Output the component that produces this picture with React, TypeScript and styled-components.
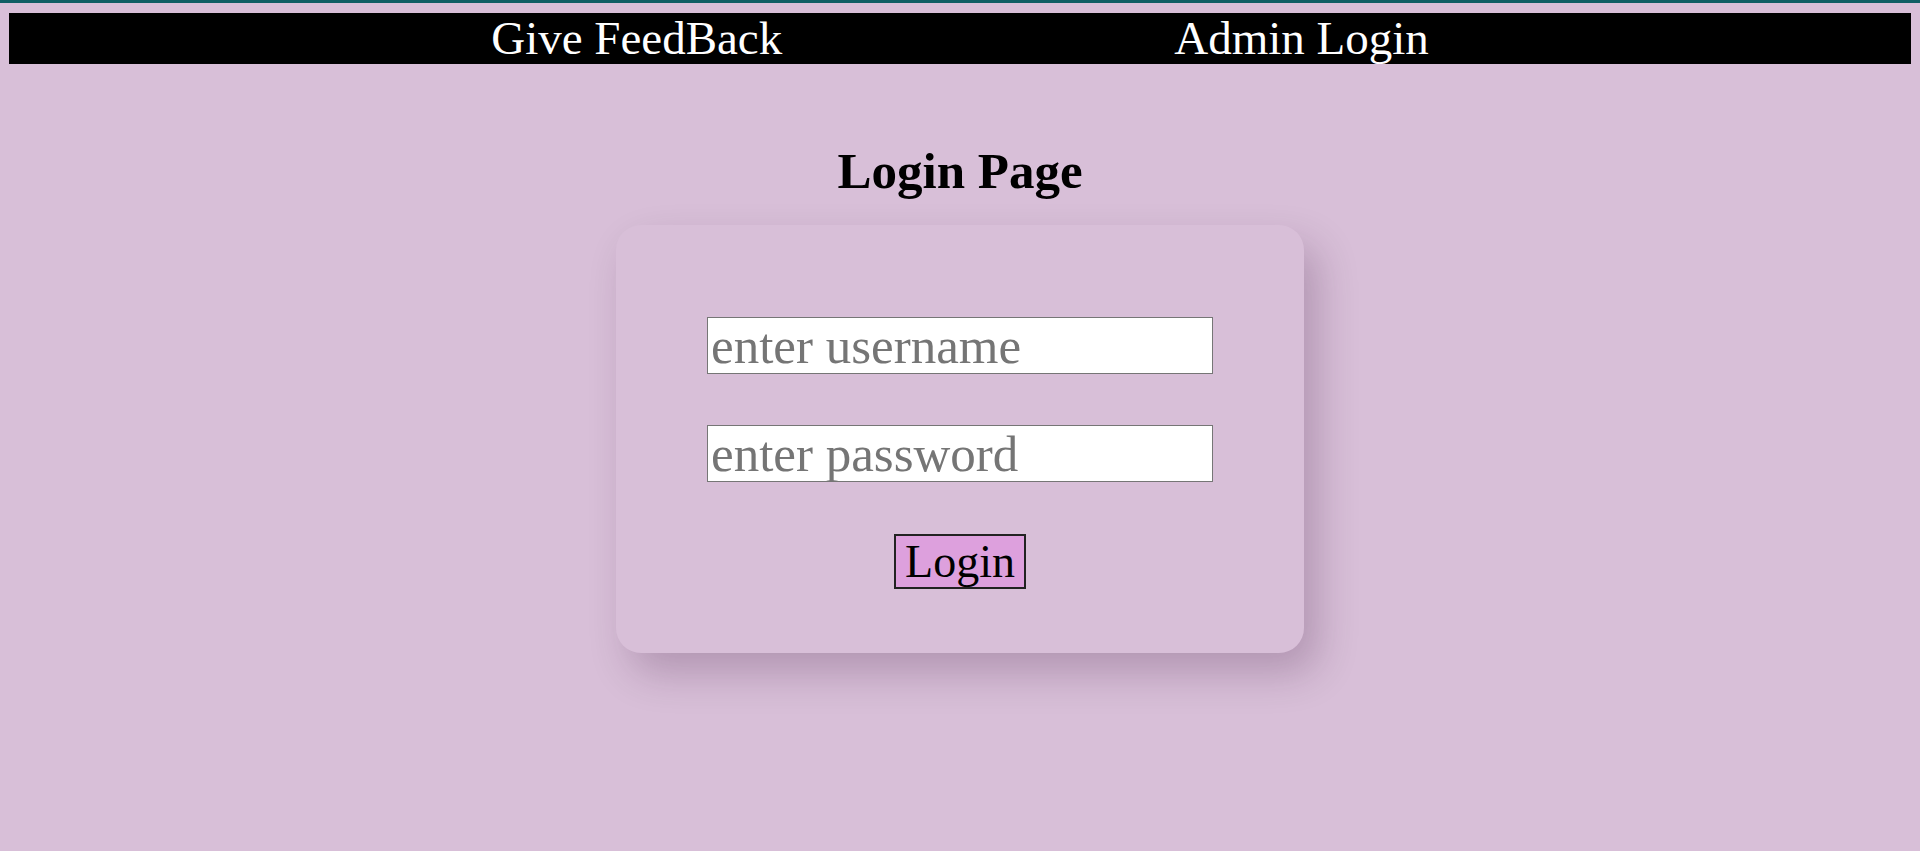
import React from "react";
import styled, { createGlobalStyle } from "styled-components";

const GlobalStyle = createGlobalStyle`
  html, body {
    margin: 0;
    padding: 0;
    background: #d8bfd8;
  }
  body {
    font-family: "Liberation Serif", "Times New Roman", serif;
  }
  * { box-sizing: border-box; }
`;

const Page = styled.div`
  min-height: 851px;
  background: #d8bfd8;
  border-top: 3px solid #0f5e64;
  padding: 10px 9px 0 9px;
  display: flex;
  flex-direction: column;
  align-items: stretch;
`;

const NavBar = styled.nav`
  height: 51px;
  background: #000;
  display: flex;
  justify-content: center;
  align-items: center;
  gap: 392px;
`;

const NavLink = styled.a`
  color: #fff;
  text-decoration: none;
  font-family: "Liberation Serif", serif;
  font-size: 47px;
  line-height: 51px;
  white-space: nowrap;
  cursor: pointer;
`;

const Heading = styled.h1`
  margin: 82px 0 0 0;
  text-align: center;
  font-family: "Liberation Serif", serif;
  font-weight: bold;
  font-size: 51px;
  line-height: 51px;
  color: #000;
`;

const Card = styled.form`
  width: 688px;
  height: 428px;
  margin: 28px auto 0 auto;
  padding-top: 92px;
  background: #d8bfd8;
  border-radius: 25px;
  box-shadow: 14px 20px 40px rgba(60, 20, 60, 0.24);
  display: flex;
  flex-direction: column;
  align-items: center;
`;

const Field = styled.input<{ $gapAfter: number }>`
  width: 506px;
  height: 57px;
  margin: 0 0 ${(p) => p.$gapAfter}px 0;
  padding: 0 3px;
  border: 1px solid #767676;
  border-radius: 0;
  background: #fff;
  font-family: "Liberation Serif", serif;
  font-size: 51px;
  color: #000;
  outline: none;
  &::placeholder {
    color: #757575;
  }
`;

const LoginButton = styled.button`
  height: 55px;
  padding: 0 9px;
  background: #dda0dd;
  border: 2px solid #222;
  border-radius: 0;
  font-family: "Liberation Serif", serif;
  font-size: 46px;
  line-height: 51px;
  color: #000;
  cursor: pointer;
`;

export default function App() {
  return (
    <>
      <GlobalStyle />
      <Page>
        <NavBar>
          <NavLink>Give FeedBack</NavLink>
          <NavLink>Admin Login</NavLink>
        </NavBar>
        <Heading>Login Page</Heading>
        <Card onSubmit={(e) => e.preventDefault()}>
          <Field $gapAfter={51} type="text" placeholder="enter username" />
          <Field $gapAfter={52} type="password" placeholder="enter password" />
          <LoginButton type="submit">Login</LoginButton>
        </Card>
      </Page>
    </>
  );
}
